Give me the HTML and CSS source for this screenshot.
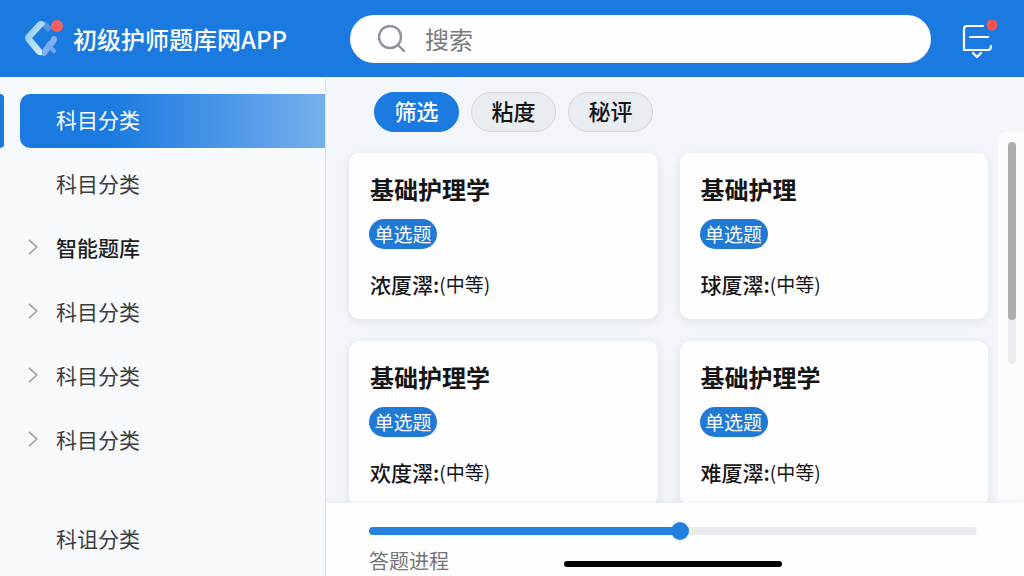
FILE: index.html
```html
<!DOCTYPE html>
<html lang="zh-CN">
<head>
  <meta charset="UTF-8" />
  <meta name="viewport" content="width=device-width, initial-scale=1.0" />
  <title>初级护师题库网APP</title>
  <link rel="stylesheet" href="styles.css">
</head>
<body>

  <header class="topbar">
    <div class="brand">
      <svg class="logo" viewBox="0 0 42 40" aria-hidden="true">
        <defs>
          <linearGradient id="logoLeft" x1="0" y1="0" x2="1" y2="1">
            <stop offset="0" stop-color="#7fbcf0" />
            <stop offset="0.5" stop-color="#b5dcf8" />
            <stop offset="1" stop-color="#dcf1fc" />
          </linearGradient>
        </defs>
        <path d="M20 4 L27 11" stroke="#5596e8" stroke-width="6" fill="none" />
        <path d="M31 20 Q31 23 27 25 L21 34" stroke="#7fb0f0" stroke-width="6" stroke-linecap="round" fill="none" />
        <path d="M26 27 L31 32" stroke="#6fa6ee" stroke-width="4" stroke-linecap="round" fill="none" />
        <path d="M18 2 Q21 2 22 5 L9 19 L19 31 V36 Q16 37 13 34 L3 22 Q1 19 3 16 L14 4 Q16 2 18 2 Z" fill="url(#logoLeft)" />
        <circle cx="34" cy="7" r="6" fill="#f4605d" />
      </svg>
      <h1>初级护师题库网APP</h1>
    </div>

    <form class="search">
      <svg class="search-icon" viewBox="0 0 28 28" aria-hidden="true">
        <circle cx="12" cy="12" r="11" />
        <path d="M20 20 L26 26" />
      </svg>
      <input type="search" placeholder="搜索" aria-label="搜索" />
    </form>

    <button type="button" class="messages" aria-label="消息">
      <svg viewBox="0 0 36 40" aria-hidden="true">
        <path d="M21 7 H5 Q2 7 2 10 V31 H26 Q29 31 29 27" />
        <path d="M8 18 H26" />
        <path d="M11 34 L15 38 L19 34" />
        <circle cx="30" cy="6" r="5.5" />
      </svg>
    </button>
  </header>

  <div class="layout">
    <nav class="sidebar">
      <a href="#" class="nav-item active">科目分类</a>
      <a href="#" class="nav-item">科目分类</a>
      <a href="#" class="nav-item strong"><svg class="chevron" viewBox="0 0 10 16"><path d="M1 1 L9 8 L1 15" /></svg>智能题库</a>
      <a href="#" class="nav-item"><svg class="chevron" viewBox="0 0 10 16"><path d="M1 1 L9 8 L1 15" /></svg>科目分类</a>
      <a href="#" class="nav-item"><svg class="chevron" viewBox="0 0 10 16"><path d="M1 1 L9 8 L1 15" /></svg>科目分类</a>
      <a href="#" class="nav-item"><svg class="chevron" viewBox="0 0 10 16"><path d="M1 1 L9 8 L1 15" /></svg>科目分类</a>
      <a href="#" class="nav-item last">科诅分类</a>
    </nav>

    <main class="main">
      <div class="filters">
        <button type="button" class="filter active">筛选</button>
        <button type="button" class="filter">粘度</button>
        <button type="button" class="filter">秘评</button>
      </div>

      <div class="content">
        <div class="cards">
          <article class="card">
            <h2>基础护理学</h2>
            <span class="badge">单选题</span>
            <p><span class="meta">浓厦濢:</span><span class="level">(中等)</span></p>
          </article>
          <article class="card">
            <h2>基础护理</h2>
            <span class="badge">单选题</span>
            <p><span class="meta">球厦濢:</span><span class="level">(中等)</span></p>
          </article>
          <article class="card">
            <h2>基础护理学</h2>
            <span class="badge">单选题</span>
            <p><span class="meta">欢度濢:</span><span class="level">(中等)</span></p>
          </article>
          <article class="card">
            <h2>基础护理学</h2>
            <span class="badge">单选题</span>
            <p><span class="meta">难厦濢:</span><span class="level">(中等)</span></p>
          </article>
        </div>
        <div class="rail">
          <div class="rail-track"><div class="rail-thumb"></div></div>
        </div>
      </div>

      <footer class="progress">
        <input type="range" id="progress" min="0" max="1000" value="512" />
        <div class="progress-row">
          <label for="progress">答题进程</label>
          <div class="home-bar"></div>
        </div>
      </footer>
    </main>
  </div>

</body>
</html>
```

FILE: styles.css
```css
* {
  box-sizing: border-box;
}
body {
  margin: 0;
  height: 100vh;
  display: flex;
  flex-direction: column;
  overflow: hidden;
  font-family: "Noto Sans CJK SC", sans-serif;
  background: #f2f5f9;
  color: #151515;
}
h1, h2, p {
  margin: 0;
}
button, input {
  font-family: inherit;
}

/* top bar */
.topbar {
  display: flex;
  align-items: center;
  flex: none;
  height: 77px;
  padding-right: 26px;
  background: #1b7ae0;
}
.brand {
  display: flex;
  align-items: center;
  gap: 8px;
  width: 350px;
  padding-left: 23px;
}
.logo {
  width: 42px;
  height: 40px;
}
.brand h1 {
  font-size: 24px;
  line-height: 32px;
  font-weight: 500;
  color: #fff;
}
.search {
  flex: 1;
  display: flex;
  align-items: center;
  gap: 19px;
  height: 48px;
  padding: 0 28px;
  border-radius: 24px;
  background: #fefefe;
}
.search-icon {
  flex: none;
  width: 28px;
  height: 28px;
  fill: none;
  stroke: #8e909c;
  stroke-width: 2.4;
  stroke-linecap: round;
}
.search input {
  flex: 1;
  min-width: 0;
  padding: 0;
  border: 0;
  outline: 0;
  background: none;
  font-size: 24px;
  line-height: 32px;
}
.search input::placeholder {
  color: #7b7b7d;
}
.messages {
  width: 36px;
  height: 40px;
  margin-left: 31px;
  padding: 0;
  border: 0;
  background: none;
}
.messages svg {
  display: block;
  width: 36px;
  height: 40px;
}
.messages path {
  fill: none;
  stroke: #fff;
  stroke-width: 2.2;
  stroke-linecap: round;
  stroke-linejoin: round;
}
.messages circle {
  fill: #f4554f;
}

.layout {
  flex: 1;
  display: flex;
  min-height: 0;
}

/* sidebar */
.sidebar {
  flex: none;
  display: flex;
  flex-direction: column;
  gap: 10px;
  width: 326px;
  padding: 17px 0 20px 20px;
  border-right: 1px solid #dbe5ec;
  background: #f6fafd;
}
.nav-item {
  position: relative;
  display: flex;
  align-items: center;
  flex: none;
  height: 54px;
  padding: 0 0 4px 36px;
  font-size: 21px;
  line-height: 28px;
  color: #3c3c3e;
  text-decoration: none;
}
.nav-item.active {
  border-radius: 10px 0 0 10px;
  background: linear-gradient(90deg, #1b7ae0 30%, #76b0ec);
  color: #fff;
}
.nav-item.active::before {
  content: "";
  position: absolute;
  left: -20px;
  top: 0;
  width: 4px;
  height: 100%;
  border-radius: 0 4px 4px 0;
  background: #1b7ae0;
}
.nav-item.strong {
  color: #1e1e20;
  font-weight: 500;
}
.nav-item.last {
  height: 32px;
  margin-top: auto;
}
.chevron {
  width: 10px;
  height: 16px;
  margin: 0 18px 0 -28px;
  fill: none;
  stroke: #a6a8ac;
  stroke-width: 1.8;
}

/* main area */
.main {
  flex: 1;
  display: flex;
  flex-direction: column;
  min-width: 0;
}
.filters {
  display: flex;
  gap: 12px;
  padding: 15px 48px 0;
}
.filter {
  width: 85px;
  height: 40px;
  padding: 0 0 4px;
  border: 1px solid #d3d6db;
  border-radius: 20px;
  background: #e9ecf0;
  font-size: 22px;
  line-height: 30px;
  font-weight: 500;
  color: #151515;
}
.filter.active {
  border-color: #1b7ae0;
  background: #1b7ae0;
  color: #fff;
}
.content {
  flex: 1;
  display: flex;
  gap: 10px;
  min-height: 0;
  overflow: hidden;
}
.cards {
  flex: 1;
  display: grid;
  grid-template-columns: 1fr 1fr;
  align-content: start;
  gap: 22px;
  padding: 21px 0 0 23px;
}
.card {
  height: 166px;
  padding: 20px 21px;
  border-radius: 11px;
  background: #fefefe;
  box-shadow: 0 2px 8px rgba(60, 90, 130, 0.1);
}
.card h2 {
  font-size: 24px;
  line-height: 32px;
  font-weight: 700;
}
.badge {
  display: block;
  width: 68px;
  margin: 14px 0 20px -1px;
  border-radius: 15px;
  background: #2079d4;
  font-size: 19px;
  line-height: 30px;
  text-align: center;
  color: #fff;
}
.card p {
  display: flex;
  align-items: center;
  line-height: 30px;
}
.meta {
  font-size: 21px;
  font-weight: 500;
}
.level {
  font-size: 19px;
}
.rail {
  flex: none;
  width: 26px;
  padding: 10px 8px 0 10px;
  border-radius: 8px 0 0 0;
  background: #fbfcfd;
}
.rail-track {
  height: 222px;
  border-radius: 4px;
  background: #e9ecf0;
}
.rail-thumb {
  height: 80%;
  border-radius: 4px;
  background: #acadb1;
}

/* progress */
.progress {
  flex: none;
  height: 73px;
  padding: 18px 47px 0 43px;
  background: #fefefe;
  box-shadow: 0 -2px 8px rgba(60, 60, 60, 0.05);
  position: relative;
}
.progress input {
  -webkit-appearance: none;
  appearance: none;
  display: block;
  width: 100%;
  height: 20px;
  margin: 0;
  background: none;
}
.progress input::-webkit-slider-runnable-track {
  height: 8px;
  border-radius: 4px;
  background: linear-gradient(90deg, #2380de 51%, #e9ebef 51%);
}
.progress input::-webkit-slider-thumb {
  -webkit-appearance: none;
  width: 18px;
  height: 18px;
  margin-top: -5px;
  border-radius: 50%;
  background: #2380de;
}
.progress-row {
  display: grid;
  grid-template-columns: 1fr 36% 1fr;
  align-items: center;
  margin-top: 6px;
}
.progress-row label {
  font-size: 20px;
  line-height: 28px;
  color: #747578;
}
.home-bar {
  height: 6px;
  margin-top: 6px;
  border-radius: 3px;
  background: #050505;
}
```
